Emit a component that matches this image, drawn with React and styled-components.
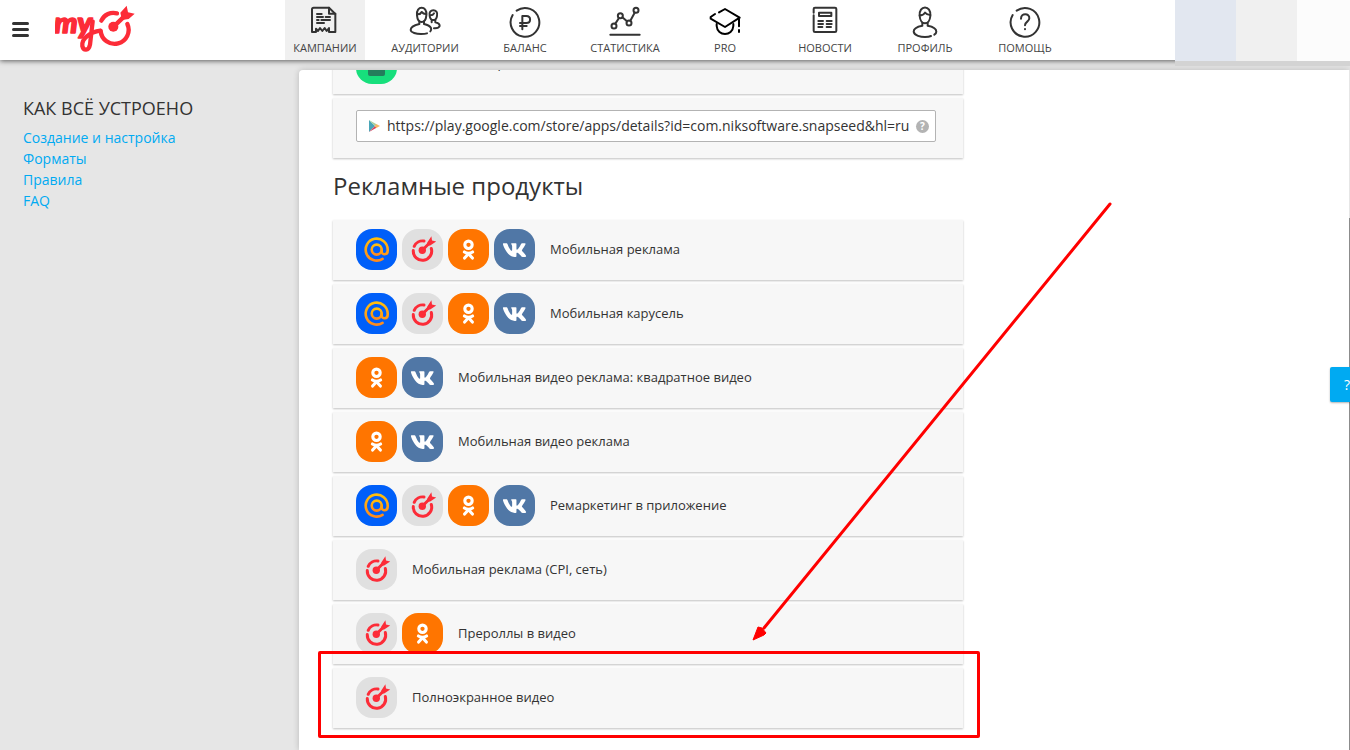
import styled, { createGlobalStyle } from "styled-components";

const products = [
  { name: "Мобильная реклама", networks: ["mail", "target", "ok", "vk"] },
  { name: "Мобильная карусель", networks: ["mail", "target", "ok", "vk"] },
  { name: "Мобильная видео реклама: квадратное видео", networks: ["ok", "vk"] },
  { name: "Мобильная видео реклама", networks: ["ok", "vk"] },
  { name: "Ремаркетинг в приложение", networks: ["mail", "target", "ok", "vk"] },
  { name: "Мобильная реклама (CPI, сеть)", networks: ["target"] },
  { name: "Прероллы в видео", networks: ["target", "ok"] },
  { name: "Полноэкранное видео", networks: ["target"], marked: true },
];

const helpLinks = ["Создание и настройка", "Форматы", "Правила", "FAQ"];

const navItems = [
  { label: "КАМПАНИИ", icon: <CampaignsIcon />, active: true },
  { label: "АУДИТОРИИ", icon: <AudienceIcon /> },
  { label: "БАЛАНС", icon: <BalanceIcon /> },
  { label: "СТАТИСТИКА", icon: <StatsIcon /> },
  { label: "PRO", icon: <ProIcon /> },
  { label: "НОВОСТИ", icon: <NewsIcon /> },
  { label: "ПРОФИЛЬ", icon: <ProfileIcon /> },
  { label: "ПОМОЩЬ", icon: <HelpIcon /> },
];

function App() {
  return (
    <Page>
      <GlobalStyle />
      <Header>
        <Brand>
          <MenuButton aria-label="Меню">
            <MenuLine />
            <MenuLine />
            <MenuLine />
          </MenuButton>
          <LogoLink href="#" aria-label="myTarget">
            <Logo />
          </LogoLink>
        </Brand>
        <Nav>
          {navItems.map((item) => (
            <NavLink href="#" key={item.label} $active={item.active}>
              {item.icon}
              {item.label}
            </NavLink>
          ))}
        </Nav>
        <Account>
          <AccountBlock $color="#e2e7f0" />
          <AccountBlock $color="#f0f0f0" />
          <AccountBlock $color="#fcfcfc" $narrow />
        </Account>
      </Header>
      <Body>
        <Sidebar>
          <SidebarTitle>КАК ВСЁ УСТРОЕНО</SidebarTitle>
          {helpLinks.map((link) => (
            <SidebarLink href="#" key={link}>
              {link}
            </SidebarLink>
          ))}
        </Sidebar>
        <Main>
          <Content>
            <Card>
              <Badge $color="#17df7c">
                <PhoneIcon />
              </Badge>
              <CardName>Мобильное приложение</CardName>
            </Card>
            <UrlCard>
              <UrlField>
                <PlayIcon />
                <UrlInput
                  aria-label="Ссылка на приложение"
                  defaultValue="https://play.google.com/store/apps/details?id=com.niksoftware.snapseed&hl=ru"
                />
                <HintButton aria-label="Подсказка">?</HintButton>
              </UrlField>
            </UrlCard>
            <SectionTitle>Рекламные продукты</SectionTitle>
            {products.map((product) => (
              <Card key={product.name}>
                {product.networks.map((network) => (
                  <NetworkBadge key={network} network={network} />
                ))}
                <CardName>{product.name}</CardName>
                {product.marked && <Frame />}
              </Card>
            ))}
          </Content>
          <Arrow viewBox="0 0 364 442">
            <path d="M359 3 L13 427" stroke="#f00" strokeWidth="3" strokeLinecap="round" />
            <path d="M2 439 L7 426 L11 427 L15 432 L13 434 Z" fill="#f00" stroke="#f00" />
          </Arrow>
        </Main>
        <Scrollbar>
          <ScrollThumb />
        </Scrollbar>
      </Body>
      <HelpTab>?</HelpTab>
    </Page>
  );
}

export default App;

function NetworkBadge({ network }) {
  if (network === "mail") {
    return (
      <Badge $color="#005ff9">
        <MailIcon />
      </Badge>
    );
  }
  if (network === "target") {
    return (
      <Badge $color="#e0e0e0">
        <TargetIcon />
      </Badge>
    );
  }
  if (network === "ok") {
    return (
      <Badge $color="#ff7500">
        <OkIcon />
      </Badge>
    );
  }
  return (
    <Badge $color="#5077a6">
      <VkIcon />
    </Badge>
  );
}

function MailIcon() {
  return (
    <svg width="41" height="41" viewBox="0 0 41 41" fill="none">
      <defs>
        <linearGradient id="mail" x1="0" y1="0" x2="0" y2="1">
          <stop offset="0" stopColor="#ffbe0d" />
          <stop offset="1" stopColor="#ff8a1c" />
        </linearGradient>
      </defs>
      <g stroke="url(#mail)" strokeWidth="2.6" strokeLinecap="round">
        <circle cx="20.7" cy="20.6" r="5" />
        <path d="M25.7 20.6 V22.4 C25.7 26.4 31.7 26.4 31.7 21.5 V20.6 A11 11 0 1 0 26.6 29.9" />
      </g>
    </svg>
  );
}

function TargetIcon() {
  return (
    <svg width="41" height="41" viewBox="0 0 41 41" fill="none">
      <g stroke="#fc2c38" strokeWidth="3" strokeLinecap="round">
        <path d="M12.2 17.3 A9.2 9.2 0 0 1 22 12" />
        <path d="M11.3 21.6 A9.2 9.2 0 1 0 29.3 19.5" />
        <path d="M20.5 21 L28 13.5" />
      </g>
      <circle cx="20.3" cy="21.3" r="3.7" fill="#fc2c38" />
      <path d="M25.3 13.5 L29.4 7.2 L30 11.6 L34.2 12.4 L28.2 16.6 L25 16.8 Z" fill="#fc2c38" />
    </svg>
  );
}

function OkIcon() {
  return (
    <svg width="41" height="41" viewBox="0 0 41 41" fill="none">
      <g stroke="#fff" strokeWidth="3.1" strokeLinecap="round" strokeLinejoin="round">
        <circle cx="20.5" cy="15.8" r="3.7" />
        <path d="M16.4 23 Q20.5 25.6 24.6 23" />
        <path d="M20.5 24.8 L16.6 29 M20.5 24.8 L24.4 29" />
      </g>
    </svg>
  );
}

function VkIcon() {
  return (
    <svg width="25" height="22" viewBox="0 0 576 512" fill="#fff">
      <path d="M545 117.7c3.7-12.5 0-21.7-17.8-21.7h-58.9c-15 0-21.9 7.9-25.6 16.7 0 0-30 73.1-72.4 120.5-13.7 13.7-20 18.1-27.5 18.1-3.7 0-9.4-4.4-9.4-16.9V117.7c0-15-4.2-21.7-16.6-21.7h-92.6c-9.4 0-15 7-15 13.5 0 14.2 21.2 17.5 23.4 57.5v86.8c0 19-3.4 22.5-10.9 22.5-20 0-68.6-73.4-97.4-157.4-5.8-16.3-11.5-22.9-26.6-22.9H38.8c-16.8 0-20.2 7.9-20.2 16.7 0 15.6 20 93.1 93.1 195.5C160.4 378.1 229 416 291.4 416c37.5 0 42.1-8.4 42.1-22.9 0-66.8-3.4-73.1 15.4-73.1 8.7 0 23.7 4.4 58.7 38.1 40 40 46.6 57.9 69 57.9h58.9c16.8 0 25.3-8.4 20.4-25-11.2-34.9-86.9-106.7-90.3-111.5-8.7-11.2-6.2-16.2 0-26.2.1-.1 72-101.3 79.4-135.6z" />
    </svg>
  );
}

function PhoneIcon() {
  return (
    <svg width="41" height="41" viewBox="0 0 41 41">
      <rect x="12" y="8" width="17" height="25" rx="2" fill="#247e5c" />
      <rect x="14.5" y="11" width="12" height="16" fill="#17df7c" />
    </svg>
  );
}

function PlayIcon() {
  return (
    <svg width="12" height="14" viewBox="0 0 12 14">
      <path d="M1 1 L7 7 L1 13 Z" fill="#4aa5b8" />
      <path d="M1 1 L8.5 5.2 L7 7 Z" fill="#a8cf9a" />
      <path d="M1 13 L8.5 8.8 L7 7 Z" fill="#d8455f" />
      <path d="M8.3 5 L12 7 L8.3 9 L6.6 7 Z" fill="#f5b666" />
    </svg>
  );
}

function Logo() {
  return (
    <svg width="80" height="48" viewBox="165 15 240 144" fill="none">
      <text
        x="163"
        y="100"
        fill="#fc2c38"
        stroke="#fc2c38"
        strokeWidth="5"
        strokeLinejoin="round"
        fontFamily="Lato, sans-serif"
        fontWeight="900"
        fontStyle="italic"
        fontSize="88"
      >
        my
      </text>
      <g stroke="#fc2c38" strokeWidth="13" strokeLinecap="round">
        <path d="M278 64 L270 134 C266 154 250 152 247 138 C244 117 270 96 301 92" />
        <path d="M304 62 C313 43 332 35 351 40" />
        <path d="M302 93 A42 42 0 1 0 382 72" />
        <path d="M341 80 L372 50" />
      </g>
      <circle cx="340" cy="80" r="15" fill="#fc2c38" />
      <path d="M361 38 L380 17 L384 37 L404 41 L386 57 L366 60 Z" fill="#fc2c38" />
    </svg>
  );
}

function CampaignsIcon() {
  return (
    <NavIcon viewBox="0 0 96 105">
      <path d="M60 5 H14 Q9 5 9 10 V78 H21 V68 L27 75 L33 66 L40 75 L47 66 L53 75 L60 66 V78 H79 V24 Z" />
      <path d="M60 5 V23 H79" />
      <path d="M24 24 H38 M24 33 H42 M50 33 H63 M24 42 H29 M37 42 H63 M24 51 H45" />
    </NavIcon>
  );
}

function AudienceIcon() {
  return (
    <NavIcon viewBox="0 0 96 105">
      <path d="M24 28 C20 -2 56 -2 52 28 C51 40 45 48 38 48 C31 48 25 40 24 28 Z" />
      <path d="M25 25 Q34 26 38 18 Q44 25 52 24" />
      <path d="M31 46 V54 C14 58 5 64 5 72 C6 80 22 84 36 84 Q48 84 54 82 M45 46 V54 Q62 58 66 66 Q68 72 64 76" />
      <path d="M62 30 C56 7 90 7 84 30 C82 46 64 46 62 30 Z M64 28 Q72 28 75 22 M68 42 V49 M79 42 V49 Q92 52 92 60 Q89 68 75 67" />
    </NavIcon>
  );
}

function BalanceIcon() {
  return (
    <NavIcon viewBox="0 0 96 105">
      <path d="M23 14 A43 43 0 1 1 11 27" />
      <path d="M40 70 V30 H52 C67 30 67 51 52 51 H33 M33 60 H53" />
    </NavIcon>
  );
}

function StatsIcon() {
  return (
    <NavIcon viewBox="0 0 96 105">
      <circle cx="15" cy="60" r="7.5" />
      <circle cx="34" cy="29" r="7.5" />
      <circle cx="60" cy="51" r="7.5" />
      <circle cx="81" cy="13" r="7.5" />
      <path d="M19 53 L30 36 M40 34 L54 46 M64 44 L77 20 M4 86 H92" />
    </NavIcon>
  );
}

function ProIcon() {
  return (
    <NavIcon viewBox="0 0 96 105" $black>
      <path d="M18 24 L5 33 V38 L48 63 L92 35 L48 9 L30 19" />
      <path d="M23 54 V60 C25 92 71 92 73 60 V54 M90 40 V61 M90 72 V78" />
    </NavIcon>
  );
}

function NewsIcon() {
  return (
    <NavIcon viewBox="0 0 96 105">
      <path d="M14 20 V9 Q14 5 18 5 H78 Q82 5 82 9 V74 Q82 78 78 78 H18 Q14 78 14 74 V28" />
      <path d="M30 20 H67 V30 H30 Z" />
      <path d="M28 45 H42 M53 45 H68 M28 54 H42 M53 54 H68 M28 63 H40 M53 63 H66" />
    </NavIcon>
  );
}

function ProfileIcon() {
  return (
    <NavIcon viewBox="0 0 96 105">
      <path d="M32 30 C28 -4 68 -4 64 30 C63 43 56 52 48 52 C40 52 33 43 32 30 Z" />
      <path d="M32 28 Q43 28 48 20 Q54 27 64 27" />
      <path d="M40 50 V59 C24 62 14 68 14 77 C15 89 36 93 48 93 Q60 93 66 90 M56 50 V59 C72 62 82 68 82 77 Q82 82 76 86" />
    </NavIcon>
  );
}

function HelpIcon() {
  return (
    <NavIcon viewBox="0 0 96 105">
      <path d="M23 14 A43 43 0 1 1 11 27" />
      <path d="M36 38 C36 20 62 21 61 37 C61 47 48 47 48 58 M48 69 V70" />
    </NavIcon>
  );
}

const GlobalStyle = createGlobalStyle`
  * {
    box-sizing: border-box;
  }

  body {
    margin: 0;
    background: #e6e6e6;
    color: #333;
    font-family: "Open Sans", "Noto Sans", sans-serif;
    font-size: 13px;
  }
`;

const Page = styled.div`
  position: relative;
  display: flex;
  flex-direction: column;
  height: 100vh;
  overflow: hidden;
`;

const Header = styled.header`
  position: relative;
  z-index: 2;
  display: flex;
  flex-shrink: 0;
  height: 60px;
  background: #fff;
  box-shadow: 0 1px 5px rgba(0, 0, 0, 0.6);
`;

const Brand = styled.div`
  display: flex;
  align-items: center;
  width: 285px;
  padding: 0 0 2px 12px;
`;

const MenuButton = styled.button`
  display: flex;
  flex-direction: column;
  gap: 3px;
  width: 17px;
  padding: 0;
  border: 0;
  background: none;
`;

const MenuLine = styled.span`
  height: 3px;
  border-radius: 2px;
  background: #333;
`;

const LogoLink = styled.a`
  display: flex;
  margin-left: 26px;
`;

const Nav = styled.nav`
  display: flex;
  gap: 20px;
`;

const NavLink = styled.a`
  display: flex;
  flex-direction: column;
  align-items: center;
  width: 80px;
  padding-top: 6px;
  background: ${(props) => (props.$active ? "#f0f0f0" : "none")};
  color: #444;
  font-size: 11px;
  line-height: 14px;
  text-decoration: none;
`;

const NavIcon = styled.svg`
  width: 32px;
  height: 35px;
  fill: none;
  stroke: ${(props) => (props.$black ? "#000" : "#333")};
  stroke-width: 6px;
  stroke-linecap: round;
  stroke-linejoin: round;
`;

const Account = styled.div`
  display: flex;
  height: 61px;
  margin-left: auto;
  box-shadow: 0 5px 0 #d3d3d3;
`;

const AccountBlock = styled.div`
  width: ${(props) => (props.$narrow ? "53px" : "61px")};
  background: ${(props) => props.$color};
`;

const Body = styled.div`
  display: flex;
  flex: 1;
  min-height: 0;
`;

const Sidebar = styled.aside`
  display: flex;
  flex-direction: column;
  align-items: flex-start;
  width: 299px;
  padding: 36px 23px;
`;

const SidebarTitle = styled.h3`
  margin: 0 0 7px;
  font-size: 18px;
  font-weight: 400;
  line-height: 24px;
`;

const SidebarLink = styled.a`
  color: #00aaf2;
  font-size: 14px;
  line-height: 21px;
  text-decoration: none;
`;

const Main = styled.main`
  position: relative;
  flex: 1;
  margin-top: 10px;
  overflow: hidden;
  border-radius: 4px 0 0 0;
  background: #fff;
  box-shadow: 0 0 6px rgba(0, 0, 0, 0.2);
`;

/* the list is scrolled, so the first card is cut by the top edge */
const Content = styled.div`
  display: flex;
  flex-direction: column;
  gap: 4px;
  max-width: 664px;
  margin-top: -36px;
  padding-left: 34px;
`;

const Card = styled.div`
  position: relative;
  display: flex;
  align-items: center;
  gap: 5px;
  height: 60px;
  padding: 0 27px 1px 23px;
  background: #f7f7f7;
  box-shadow: 0 1px 2px rgba(0, 0, 0, 0.25);
`;

const UrlCard = styled(Card)`
  padding-bottom: 4px;
`;

const CardName = styled.span`
  margin-left: 10px;
  line-height: 19px;
`;

const Badge = styled.span`
  display: flex;
  align-items: center;
  justify-content: center;
  width: 41px;
  height: 41px;
  border-radius: 16px;
  background: ${(props) => props.$color};
`;

const UrlField = styled.div`
  display: flex;
  flex: 1;
  align-items: center;
  gap: 7px;
  height: 32px;
  padding: 0 6px 0 11px;
  border: 1px solid #b3b3b3;
  border-radius: 2px;
  background: #fff;
`;

const UrlInput = styled.input`
  flex: 1;
  min-width: 0;
  height: 20px;
  padding: 0 0 1px;
  border: 0;
  outline: 0;
  color: #333;
  font-family: inherit;
  font-size: 14px;
`;

const HintButton = styled.button`
  width: 13px;
  height: 13px;
  padding: 0;
  border: 0;
  border-radius: 50%;
  background: #b3b3b3;
  color: #fff;
  font-family: inherit;
  font-size: 10px;
  font-weight: 700;
  line-height: 13px;
`;

const SectionTitle = styled.h2`
  margin: 8px 0 14px;
  font-size: 24px;
  font-weight: 400;
  line-height: 32px;
`;

const Frame = styled.div`
  position: absolute;
  inset: -17px -17px -10px -15px;
  border: 3px solid #f00;
  border-radius: 2px;
`;

const Arrow = styled.svg`
  position: absolute;
  top: 131px;
  left: 452px;
  width: 364px;
  height: 442px;
  fill: none;
`;

const Scrollbar = styled.div`
  position: relative;
  display: flex;
  flex-direction: column;
  width: 1px;
  margin-top: 10px;
  padding-top: 148px;
  background: #e6e6e6;
`;

const ScrollThumb = styled.div`
  flex: 1;
  background: #8c8c8c;
`;

const HelpTab = styled.button`
  position: absolute;
  z-index: 3;
  top: 367px;
  right: 0;
  width: 20px;
  height: 35px;
  padding: 0 0 0 14px;
  overflow: hidden;
  border: 0;
  border-radius: 2px 0 0 2px;
  background: #00aaf2;
  color: #fff;
  font-family: inherit;
  font-size: 14px;
  text-align: left;
  box-shadow: 0 1px 2px rgba(0, 0, 0, 0.3);
`;
